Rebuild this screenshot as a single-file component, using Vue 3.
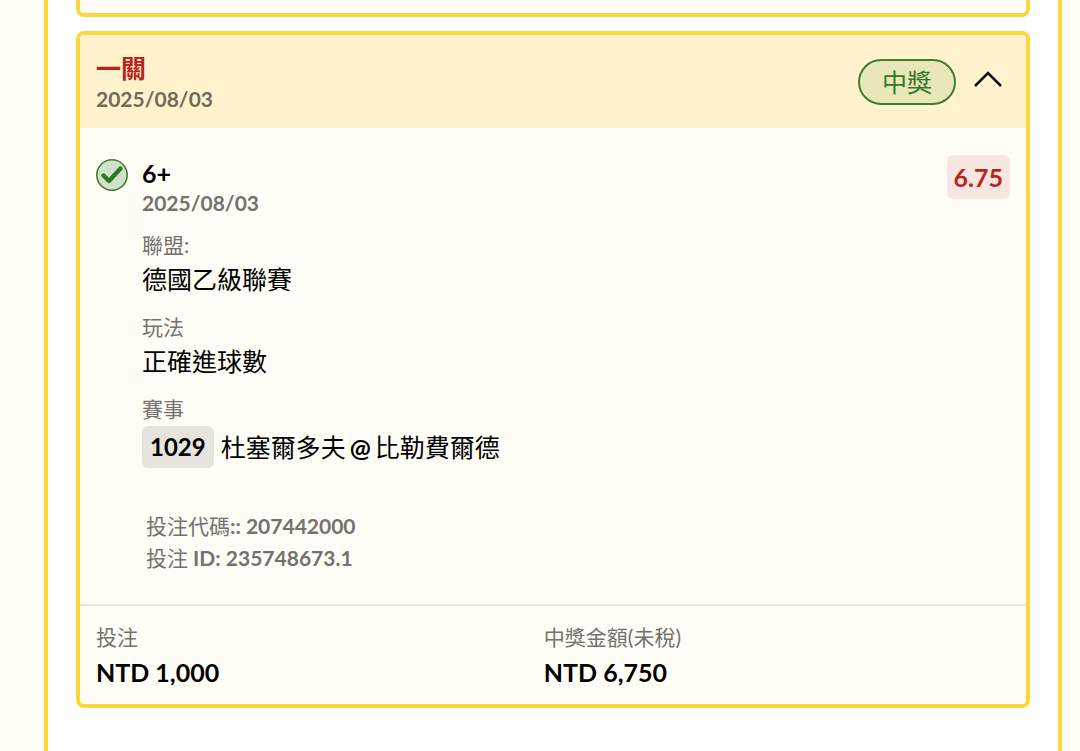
<script setup>
import { ref } from 'vue';

const open = ref(true);

const bet = {
  type: '一關',
  date: '2025/08/03',
  status: '中獎',
  pick: '6+',
  pickDate: '2025/08/03',
  odds: '6.75',
  matchNo: '1029',
  away: '杜塞爾多夫',
  home: '比勒費爾德',
  code: '207442000',
  id: '235748673.1'
};

const details = [
  { label: '聯盟:', value: '德國乙級聯賽' },
  { label: '玩法', value: '正確進球數' }
];

const totals = [
  { label: '投注', value: 'NTD 1,000' },
  { label: '中獎金額(未稅)', value: 'NTD 6,750' }
];
</script>

<template>
  <main class="panel">
    <section class="card previous"></section>
    <section class="card">
      <header class="card-header">
        <div>
          <h2 class="bet-type">{{ bet.type }}</h2>
          <p class="bet-date">{{ bet.date }}</p>
        </div>
        <div class="header-side">
          <span class="status">{{ bet.status }}</span>
          <button class="toggle" type="button" aria-label="收合" :aria-expanded="open" @click="open = !open">
            <svg class="chevron" :class="{ closed: !open }" viewBox="0 0 30 18">
              <path d="M2 16 15 3l13 13" fill="none" stroke="currentColor" stroke-width="2.6" />
            </svg>
          </button>
        </div>
      </header>

      <div v-if="open" class="card-body">
        <svg class="check" viewBox="0 0 32 32">
          <circle cx="16" cy="16" r="15.2" fill="#d2e2ca" stroke="#3f7d35" stroke-width="1.6" />
          <path d="M7.5 16.5l5.5 5.5L24.5 9.5" fill="none" stroke="#2b7a20" stroke-width="4.4" stroke-linecap="round" stroke-linejoin="round" />
        </svg>
        <div class="selection">
          <h3 class="pick">{{ bet.pick }}</h3>
          <p class="pick-date">{{ bet.pickDate }}</p>
          <dl class="details">
            <div v-for="item in details" :key="item.label">
              <dt class="label">{{ item.label }}</dt>
              <dd class="value">{{ item.value }}</dd>
            </div>
            <div>
              <dt class="label">賽事</dt>
              <dd class="match">
                <span class="match-no">{{ bet.matchNo }}</span>
                <span class="teams">
                  <span>{{ bet.away }}</span>
                  <span class="at">@</span>
                  <span>{{ bet.home }}</span>
                </span>
              </dd>
            </div>
          </dl>
          <div class="codes">
            <p>投注代碼<b>:: {{ bet.code }}</b></p>
            <p>投注<b> ID: {{ bet.id }}</b></p>
          </div>
        </div>
        <span class="odds">{{ bet.odds }}</span>
      </div>

      <dl class="totals">
        <div v-for="item in totals" :key="item.label">
          <dt class="label">{{ item.label }}</dt>
          <dd class="amount">{{ item.value }}</dd>
        </div>
      </dl>
    </section>
  </main>
</template>

<style>
body {
  background: #fffdf5;
}
</style>

<style scoped>
.panel {
  box-sizing: border-box;
  display: flex;
  flex-direction: column;
  gap: 14px;
  min-height: 100vh;
  margin: 0 18px 0 44px;
  padding: 0 28px 43px;
  border: solid #fad83c;
  border-width: 0 4px;
  background: #fff;
  color: #000;
  font-family: Lato, "Noto Sans CJK TC", sans-serif;
  font-size: 25px;
  font-weight: 400;
}

h2, h3, p, dl, dd {
  margin: 0;
  font-size: inherit;
}

.card {
  border: 4px solid #fad83c;
  border-radius: 8px;
  background: #fffdf5;
  overflow: hidden;
}

.previous {
  height: 13px;
  border-top: 0;
  border-radius: 0 0 8px 8px;
}

.card-header {
  display: flex;
  align-items: center;
  justify-content: space-between;
  padding: 16px;
  background: #fff2cc;
}

.bet-type {
  color: #b9241c;
  font-weight: 700;
  line-height: 35px;
}

.bet-date {
  color: #716b59;
  font-size: 21px;
  font-weight: 700;
  line-height: 26px;
}

.header-side {
  display: flex;
  align-items: center;
  gap: 17px;
}

.status {
  padding: 0 22px;
  border: 2px solid #3f7d35;
  border-radius: 24px;
  background: #e9e7b9;
  color: #34792b;
  line-height: 42px;
}

.toggle {
  display: flex;
  padding: 0 7px 6px 0;
  border: 0;
  background: none;
  color: #111;
  cursor: pointer;
}

.chevron {
  width: 30px;
  height: 18px;
}

.chevron.closed {
  transform: rotate(180deg);
}

.card-body {
  display: flex;
  align-items: flex-start;
  padding: 27px 16px 30px;
}

.check {
  flex: none;
  width: 32px;
  height: 32px;
  margin: 4px 14px 0 0;
}

.selection {
  flex: 1;
}

.pick {
  font-weight: 700;
  line-height: 36px;
}

.pick-date {
  color: #73726e;
  font-size: 21px;
  font-weight: 700;
  line-height: 24px;
}

.label {
  color: #73726e;
  font-size: 21px;
  line-height: 26px;
}

.details {
  display: flex;
  flex-direction: column;
  gap: 13px;
  margin-top: 17px;
}

.value {
  line-height: 43px;
}

.match {
  display: flex;
  align-items: center;
  gap: 7px;
  padding-top: 4px;
}

.match-no {
  padding: 0 8px;
  border-radius: 6px;
  background: #e5e4dd;
  font-size: 24px;
  font-weight: 700;
  line-height: 42px;
}

.teams {
  display: flex;
  gap: 4px;
  line-height: 42px;
}

.at {
  font-weight: 700;
}

.codes {
  margin-top: 42px;
  padding-left: 4px;
  color: #73726e;
  font-size: 21px;
  line-height: 32px;
}

.codes b {
  font-weight: 700;
}

.odds {
  padding: 0 7px;
  border-radius: 6px;
  background: #f7e7e0;
  color: #b9241c;
  font-weight: 700;
  line-height: 44px;
}

.totals {
  display: grid;
  grid-template-columns: 49fr 51fr;
  padding: 18px 16px 10px;
  border-top: 2px solid #e5e4df;
}

.amount {
  font-weight: 700;
  line-height: 44px;
}
</style>
